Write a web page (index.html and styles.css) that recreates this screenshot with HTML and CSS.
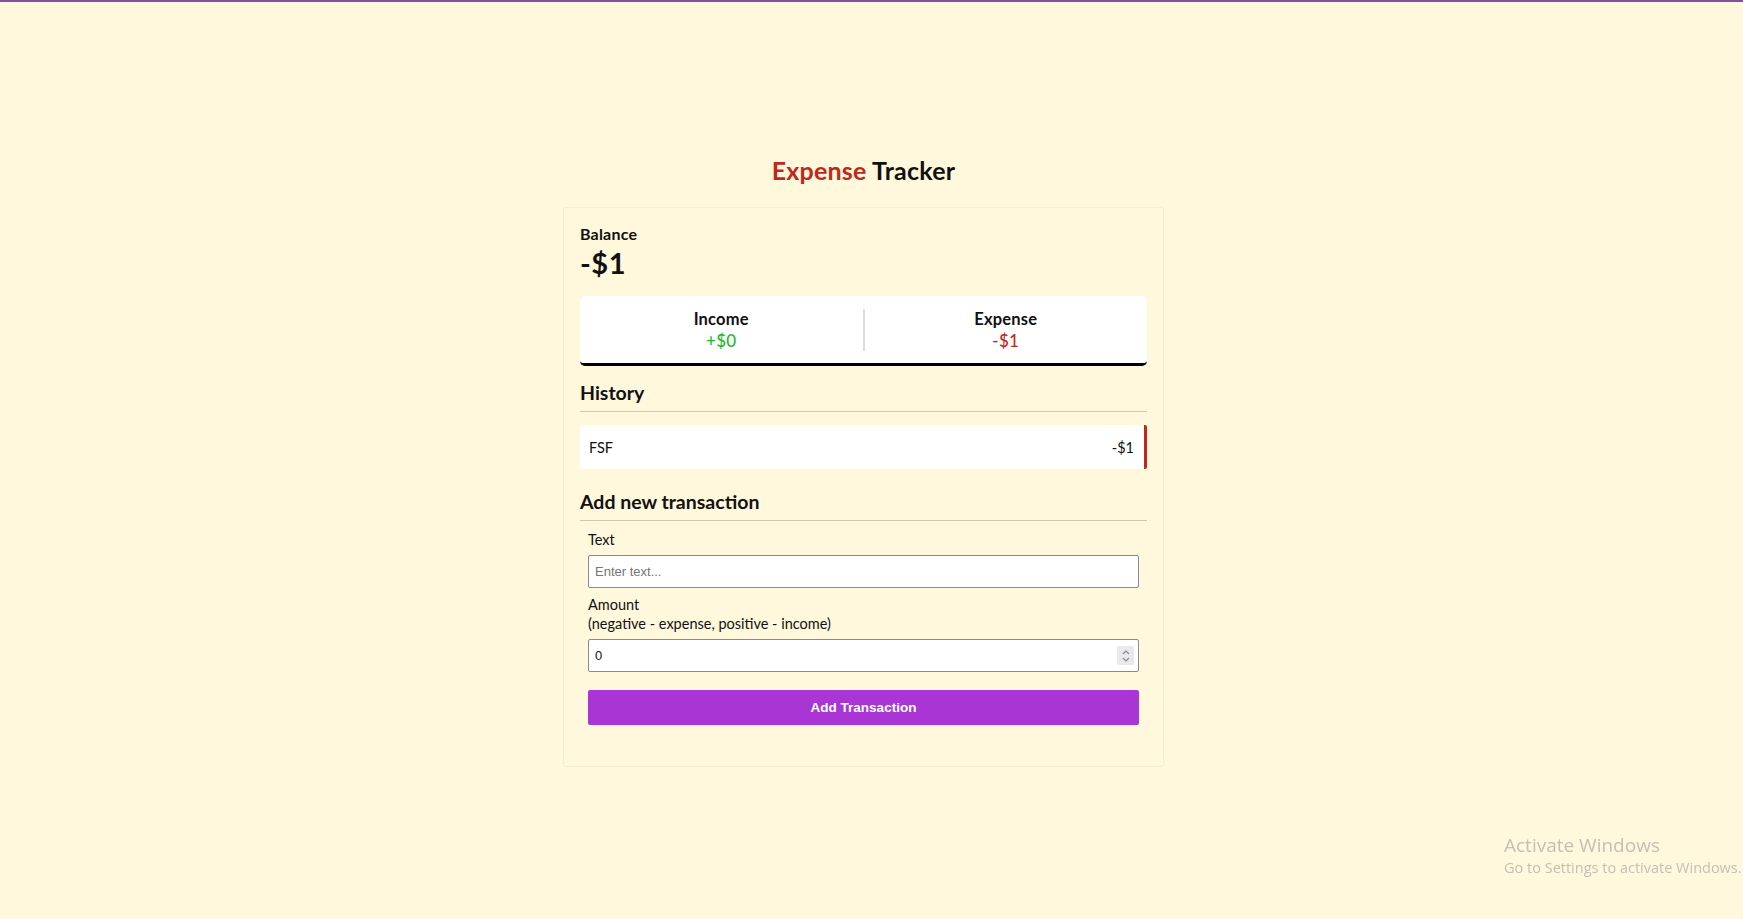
FILE: index.html
```html
<!DOCTYPE html>
<html lang="en">
<head>
<meta charset="utf-8">
<title>Expense Tracker</title>
<link rel="stylesheet" href="styles.css">
</head>
<body>
<div class="topbar"></div>
<h2 class="title"><span class="title-accent">Expense</span> Tracker</h2>
<div class="card">
  <h4 class="balance-label">Balance</h4>
  <h1 class="balance-value">-$1</h1>
  <div class="inc-exp">
    <div class="inc-exp-col">
      <h4 class="inc-exp-label">Income</h4>
      <p class="money plus">+$0</p>
    </div>
    <div class="inc-exp-col">
      <h4 class="inc-exp-label">Expense</h4>
      <p class="money minus">-$1</p>
    </div>
  </div>
  <h3 class="section-title">History</h3>
  <ul class="list">
    <li class="list-item minus-item"><span>FSF</span><span>-$1</span></li>
  </ul>
  <h3 class="section-title">Add new transaction</h3>
  <form class="form">
    <div class="form-control first">
      <label class="field-label" for="text">Text</label>
      <input class="field" type="text" id="text" placeholder="Enter text...">
    </div>
    <div class="form-control">
      <label class="field-label" for="amount">Amount <br>(negative - expense, positive - income)</label>
      <div class="number-wrap">
        <input class="field" type="number" id="amount" value="0">
        <span class="spinner">
          <svg width="10" height="14" viewBox="0 0 10 14"><path d="M2 5 L5 2 L8 5" fill="none" stroke="#8a8a8a" stroke-width="1.2"/><path d="M2 9 L5 12 L8 9" fill="none" stroke="#8a8a8a" stroke-width="1.2"/></svg>
        </span>
      </div>
    </div>
    <button class="btn" type="button">Add Transaction</button>
  </form>
</div>
<div class="watermark">
  <div class="wm-title">Activate Windows</div>
  <div class="wm-sub">Go to Settings to activate Windows.</div>
</div>
</body>
</html>
```
FILE: styles.css
```css
* { box-sizing: border-box; }
html, body { margin: 0; padding: 0; }
body {
  background: #fff8dc;
  font-family: Lato, "Open Sans", sans-serif;
  color: #111;
  min-height: 919px;
  display: flex;
  flex-direction: column;
  align-items: center;
  padding-right: 16px;
}
.topbar {
  align-self: stretch;
  margin-right: -16px;
  height: 2px;
  background: #7e52a0;
}
.title {
  margin: 153px 0 0;
  font-size: 25px;
  line-height: 30px;
  font-weight: 700;
  letter-spacing: 0.2px;
}
.title-accent { color: #c0281c; }
.card {
  margin-top: 22px;
  width: 601px;
  border: 1px solid #f4edd4;
  border-radius: 3px;
  padding: 17px 16px 41px;
}
.balance-label {
  margin: 0;
  font-size: 16px;
  line-height: 18px;
  font-weight: 700;
  letter-spacing: 0.2px;
}
.balance-value {
  margin: 3px 0 0;
  font-size: 29px;
  line-height: 34px;
  font-weight: 700;
  letter-spacing: 0.5px;
}
.inc-exp {
  margin-top: 16px;
  background: #fff;
  border-radius: 5px;
  border-bottom: 3px solid #000;
  display: flex;
  padding: 13px 0 12px;
}
.inc-exp-col {
  flex: 1;
  text-align: center;
}
.inc-exp-col:first-child { border-right: 2px solid #dcdcdc; }
.inc-exp-label {
  margin: 0;
  font-size: 16.5px;
  line-height: 20px;
  font-weight: 700;
  letter-spacing: 0.2px;
}
.money {
  margin: 2px 0 0;
  font-size: 17px;
  line-height: 20px;
  font-weight: 500;
  letter-spacing: 0.3px;
}
.plus { color: #22b82a; }
.minus { color: #c0281c; }
.section-title {
  margin: 15px 0 0;
  font-size: 19.5px;
  line-height: 24px;
  font-weight: 700;
  padding-bottom: 6px;
  border-bottom: 1px solid #cfc7af;
}
.list {
  list-style: none;
  margin: 13px 0 0;
  padding: 0;
}
.list-item {
  background: #fff;
  display: flex;
  justify-content: space-between;
  align-items: center;
  height: 44px;
  padding: 0 10px 0 9px;
  font-size: 14.5px;
  border-radius: 2px;
}
.minus-item { border-right: 3px solid #c0281c; }
.list + .section-title { margin-top: 21px; }
.form { padding: 0 8px; }
.form-control { margin-top: 7px; }
.form-control.first { margin-top: 9px; }
.field-label {
  display: block;
  font-size: 14.5px;
  line-height: 19px;
  margin-bottom: 6px;
}
.field {
  display: block;
  width: 100%;
  height: 33px;
  border: 1px solid #8a8a8a;
  border-radius: 2px;
  background: #fff;
  padding: 0 6px;
  font-family: "Liberation Sans", Arial, sans-serif;
  font-size: 13px;
  color: #111;
  outline: none;
}
.field::placeholder { color: #757575; }
.field[type=number] { -moz-appearance: textfield; }
.field[type=number]::-webkit-inner-spin-button,
.field[type=number]::-webkit-outer-spin-button { -webkit-appearance: none; margin: 0; }
.number-wrap { position: relative; }
.spinner {
  position: absolute;
  right: 5px;
  top: 7px;
  width: 17px;
  height: 19px;
  background: #e9e9ed;
  border-radius: 2px;
  display: flex;
  align-items: center;
  justify-content: center;
}
.btn {
  display: block;
  width: 100%;
  height: 35px;
  margin-top: 18px;
  background: #a936d4;
  color: #fff;
  border: 0;
  border-radius: 2px;
  font-family: "Liberation Sans", Arial, sans-serif;
  font-weight: 700;
  font-size: 13.5px;
}
.watermark {
  position: fixed;
  left: 1504px;
  top: 833px;
  color: #c4bfb3;
  font-family: "Open Sans", "Noto Sans", sans-serif;
}
.wm-title { font-size: 19px; line-height: 24px; }
.wm-sub { font-size: 14.5px; line-height: 22px; }
```
